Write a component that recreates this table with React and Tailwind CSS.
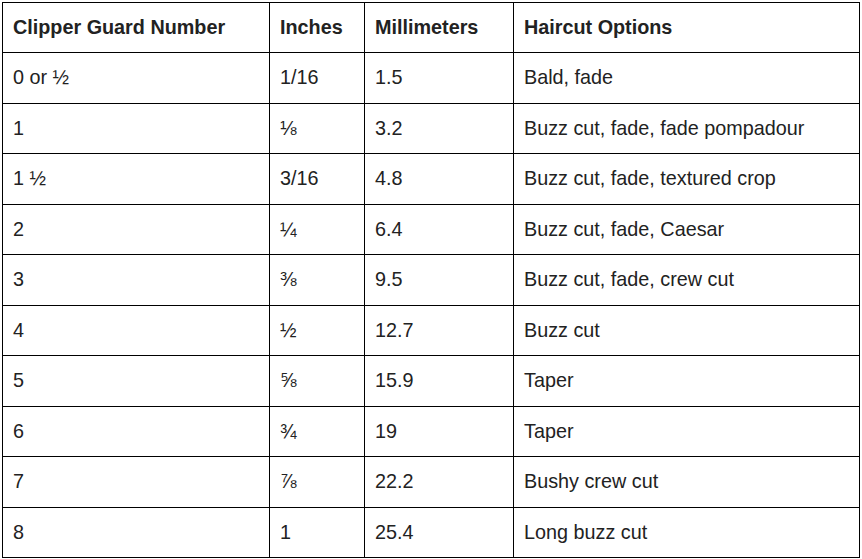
const rows = [
  ['0 or ½', '1/16', '1.5', 'Bald, fade'],
  ['1', '⅛', '3.2', 'Buzz cut, fade, fade pompadour'],
  ['1 ½', '3/16', '4.8', 'Buzz cut, fade, textured crop'],
  ['2', '¼', '6.4', 'Buzz cut, fade, Caesar'],
  ['3', '⅜', '9.5', 'Buzz cut, fade, crew cut'],
  ['4', '½', '12.7', 'Buzz cut'],
  ['5', '⅝', '15.9', 'Taper'],
  ['6', '¾', '19', 'Taper'],
  ['7', '⅞', '22.2', 'Bushy crew cut'],
  ['8', '1', '25.4', 'Long buzz cut'],
]

const headers = ['Clipper Guard Number', 'Inches', 'Millimeters', 'Haircut Options']

export default function App() {
  return (
    <div className="min-h-screen bg-white pl-[2px] pt-[2px] font-['Liberation_Sans',Arial,sans-serif] text-[19.8px] text-[#222]">
      <table className="w-[857px] table-fixed border-collapse border border-black">
        <colgroup>
          <col className="w-[267px]" />
          <col className="w-[95px]" />
          <col className="w-[149px]" />
          <col className="w-[346px]" />
        </colgroup>
        <thead>
          <tr className="h-[50px]">
            {headers.map(h => (
              <th key={h} className="border border-black px-[10px] text-left font-bold">
                {h}
              </th>
            ))}
          </tr>
        </thead>
        <tbody>
          {rows.map((r, i) => (
            <tr key={i} className={i % 2 === 0 ? 'h-[51px]' : 'h-[50px]'}>
              {r.map((c, j) => (
                <td key={j} className="border border-black px-[10px] text-left">
                  {c}
                </td>
              ))}
            </tr>
          ))}
        </tbody>
      </table>
    </div>
  )
}
